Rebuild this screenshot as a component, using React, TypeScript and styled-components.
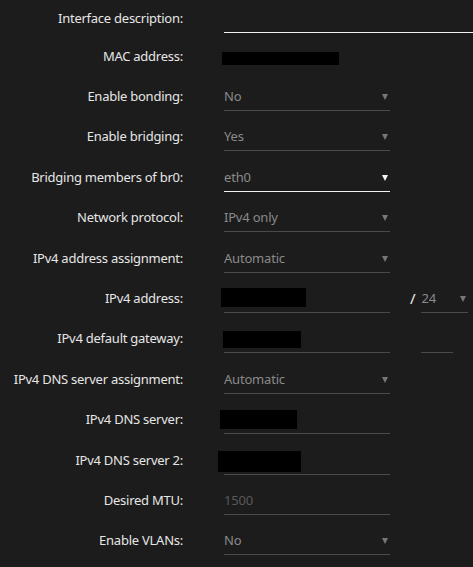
import styled, { createGlobalStyle } from "styled-components";

const GlobalStyle = createGlobalStyle`
  html, body {
    margin: 0;
    padding: 0;
    background: #1c1c1c;
    overflow: hidden;
  }
  body {
    font-family: "Noto Sans", "Open Sans", sans-serif;
    font-size: 13px;
  }
`

const Form = styled.div`
  width: 473px;
  height: 567px;
  background: #1c1c1c;
  padding-top: 3px;
  box-sizing: border-box;
`

const Row = styled.div<{ $pitch?: number }>`
  display: grid;
  grid-template-columns: 183px 166px auto;
  column-gap: 41px;
  align-items: start;
  height: ${p => p.$pitch ?? 40.4}px;
`

const Label = styled.div`
  text-align: right;
  color: #e6e6e6;
  padding-top: 3px;
  line-height: 24px;
  letter-spacing: -0.25px;
  white-space: nowrap;
`

const Field = styled.div<{ $active?: boolean; $wide?: boolean; $plain?: boolean }>`
  position: relative;
  height: 30px;
  box-sizing: border-box;
  padding-top: 3px;
  line-height: 24px;
  letter-spacing: -0.2px;
  color: #8a8a8a;
  border-bottom: 1px solid ${p => (p.$plain ? "transparent" : p.$active ? "#f0f0f0" : "#4a4a4a")};
  ${p => p.$wide && "width: 260px;"}
`

const Placeholder = styled.span`
  color: #595959;
`

const Arrow = styled.span<{ $active?: boolean }>`
  position: absolute;
  right: 2px;
  top: 13px;
  width: 0;
  height: 0;
  border-left: 3px solid transparent;
  border-right: 3px solid transparent;
  border-top: 6px solid ${p => (p.$active ? "#f4f4f4" : "#777777")};
`

const Redacted = styled.span<{ $x: number; $y: number; $w: number; $h: number }>`
  position: absolute;
  left: ${p => p.$x}px;
  top: ${p => p.$y}px;
  width: ${p => p.$w}px;
  height: ${p => p.$h}px;
  background: #000;
`

const Extra = styled.div`
  display: flex;
  align-items: start;
  margin-left: -21px;
  gap: 5px;
`

const Slash = styled.span<{ $hidden?: boolean }>`
  color: #f0f0f0;
  padding-top: 3px;
  line-height: 24px;
  font-size: 15px;
  visibility: ${p => (p.$hidden ? "hidden" : "visible")};
`

const Small = styled(Field)<{ $w: number }>`
  width: ${p => p.$w}px;
  padding-left: 1px;
`

type Sel = { label: string; value: string; active?: boolean }

function SelectRow({ label, value, active }: Sel) {
  return (
    <Row>
      <Label>{label}</Label>
      <Field $active={active}>
        {value}
        <Arrow $active={active} />
      </Field>
    </Row>
  )
}

export default function App() {
  return (
    <Form>
      <GlobalStyle />
      <Row $pitch={37.6}>
        <Label>Interface description:</Label>
        <Field $active $wide />
      </Row>
      <Row>
        <Label>MAC address:</Label>
        <Field $plain>
          <Redacted $x={-2} $y={11} $w={117} $h={13} />
        </Field>
      </Row>
      <SelectRow label="Enable bonding:" value="No" />
      <SelectRow label="Enable bridging:" value="Yes" />
      <SelectRow label="Bridging members of br0:" value="eth0" active />
      <SelectRow label="Network protocol:" value="IPv4 only" />
      <SelectRow label="IPv4 address assignment:" value="Automatic" />
      <Row>
        <Label>IPv4 address:</Label>
        <Field>
          <Redacted $x={-3} $y={5} $w={85} $h={19} />
        </Field>
        <Extra>
          <Slash>/</Slash>
          <Small $w={47}>
            24
            <Arrow />
          </Small>
        </Extra>
      </Row>
      <Row>
        <Label>IPv4 default gateway:</Label>
        <Field>
          <Redacted $x={-1} $y={8} $w={78} $h={17} />
        </Field>
        <Extra>
          <Slash $hidden>/</Slash>
          <Small $w={32} />
        </Extra>
      </Row>
      <SelectRow label="IPv4 DNS server assignment:" value="Automatic" />
      <Row>
        <Label>IPv4 DNS server:</Label>
        <Field>
          <Redacted $x={-4} $y={6} $w={77} $h={19} />
        </Field>
      </Row>
      <Row>
        <Label>IPv4 DNS server 2:</Label>
        <Field>
          <Redacted $x={-6} $y={6} $w={83} $h={21} />
        </Field>
      </Row>
      <Row>
        <Label>Desired MTU:</Label>
        <Field>
          <Placeholder>1500</Placeholder>
        </Field>
      </Row>
      <SelectRow label="Enable VLANs:" value="No" />
    </Form>
  )
}
